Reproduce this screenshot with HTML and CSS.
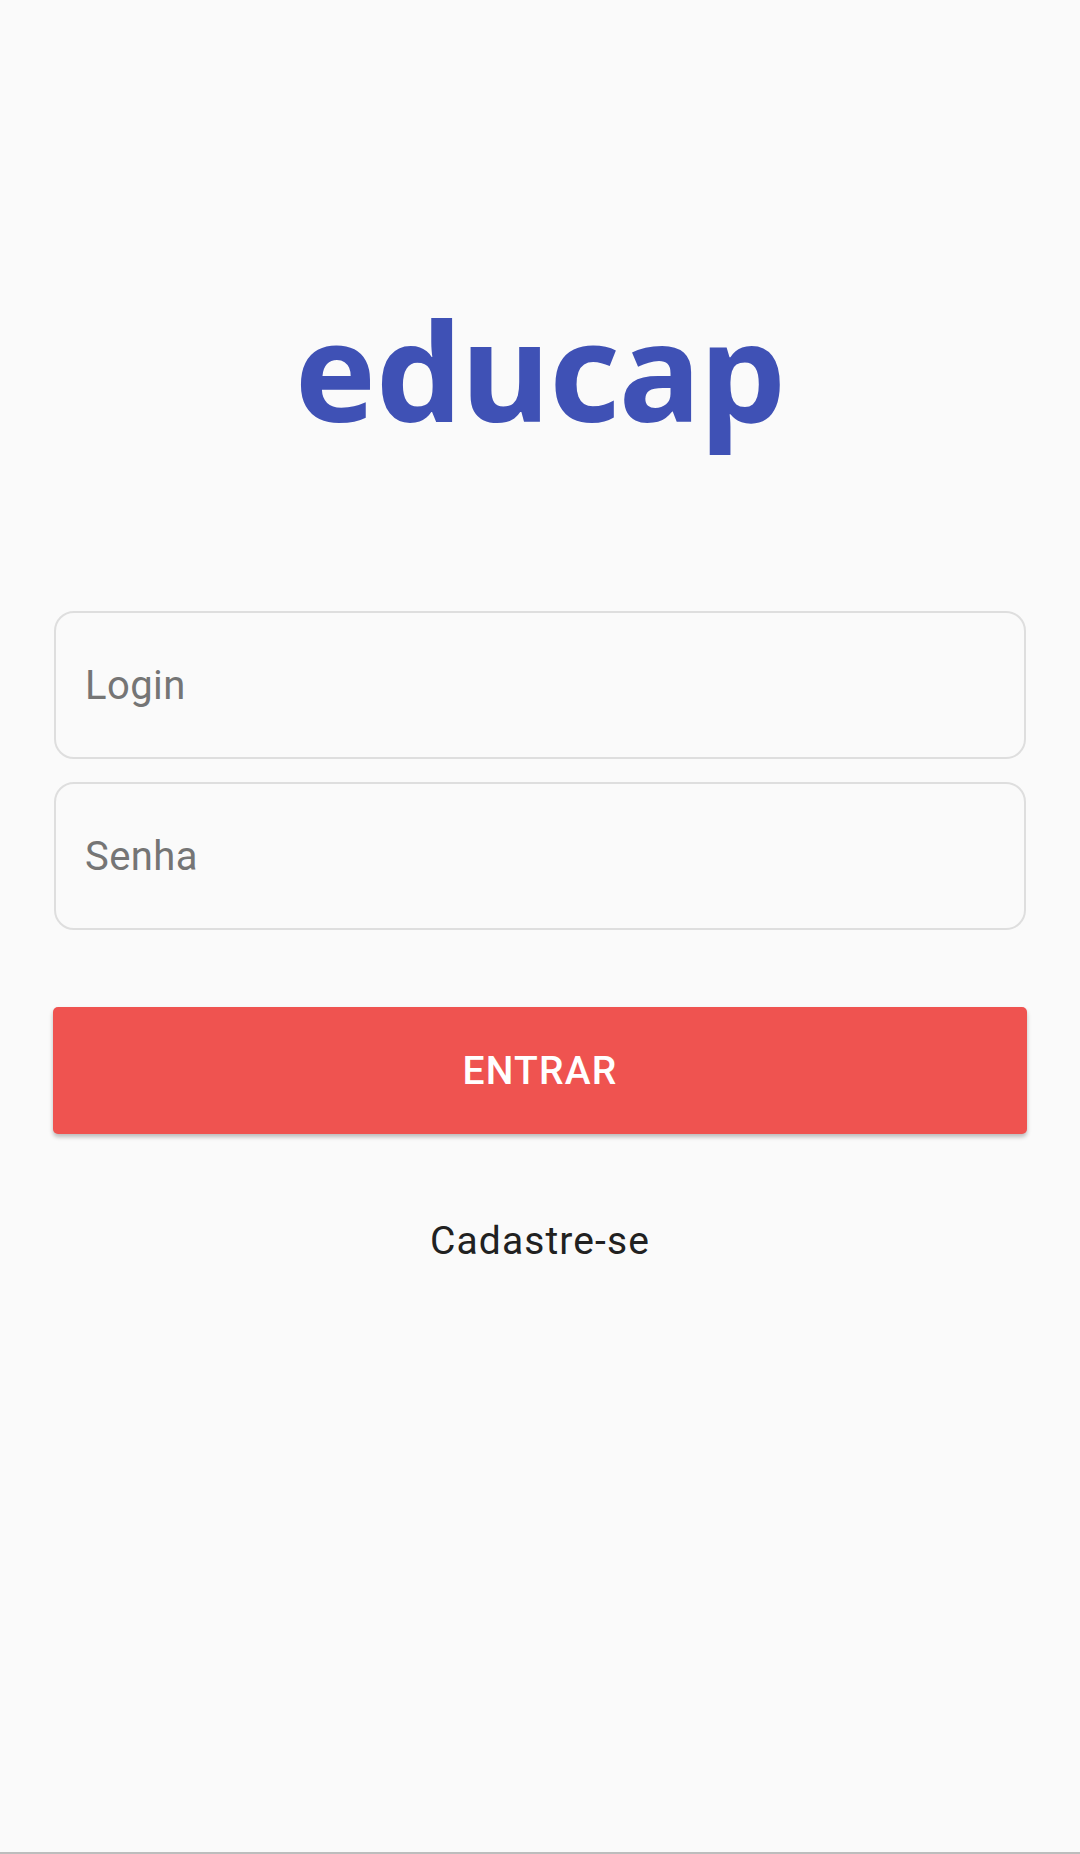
FILE: index.html
```html
<!DOCTYPE html>
<html lang="pt">
<head>
<meta charset="utf-8">
<title>educap</title>
<link rel="stylesheet" href="styles.css">
</head>
<body>
<main class="screen">
  <h1 class="logo">educap</h1>
  <form class="form">
    <div class="field"><span class="placeholder">Login</span></div>
    <div class="field"><span class="placeholder">Senha</span></div>
    <button type="button" class="btn">ENTRAR</button>
  </form>
  <a class="signup">Cadastre-se</a>
</main>
<div class="navbar-edge"></div>
</body>
</html>
```
FILE: styles.css
```css
html, body {
  margin: 0;
  padding: 0;
  background: #fafafa;
}
body {
  width: 1080px;
  height: 1854px;
  display: flex;
  flex-direction: column;
  font-family: Roboto, "Liberation Sans", sans-serif;
}
.screen {
  flex: 1;
  display: flex;
  flex-direction: column;
  align-items: center;
  padding: 0 54px;
}
.logo {
  margin: 269px 0 0;
  height: 200px;
  font-family: "Noto Sans", "Open Sans", sans-serif;
  font-weight: 700;
  font-size: 137px;
  line-height: 200px;
  color: #3f51b5;
  letter-spacing: -1px;
}
.form {
  align-self: stretch;
  display: flex;
  flex-direction: column;
  margin-top: 142px;
}
.field {
  height: 144px;
  border: 2px solid #dedede;
  border-radius: 20px;
  display: flex;
  align-items: center;
  padding: 0 29px;
  margin-bottom: 23px;
}
.field + .field {
  margin-bottom: 0;
}
.placeholder {
  font-size: 40px;
  letter-spacing: 0.4px;
  color: #757575;
}
.btn {
  margin-top: 77px;
  height: 127px;
  border: none;
  border-radius: 5px;
  background: #ef5350;
  color: #fff;
  font-family: Roboto, "Liberation Sans", sans-serif;
  font-weight: 500;
  font-size: 39px;
  letter-spacing: 1.2px;
  box-shadow: 0 3px 4px rgba(0,0,0,0.25);
  margin-left: -1px;
  margin-right: -1px;
}
.signup {
  margin-top: 84px;
  font-size: 39px;
  letter-spacing: 1.1px;
  color: #212121;
}
.navbar-edge {
  height: 2px;
  background: #bdbdbd;
}
```
